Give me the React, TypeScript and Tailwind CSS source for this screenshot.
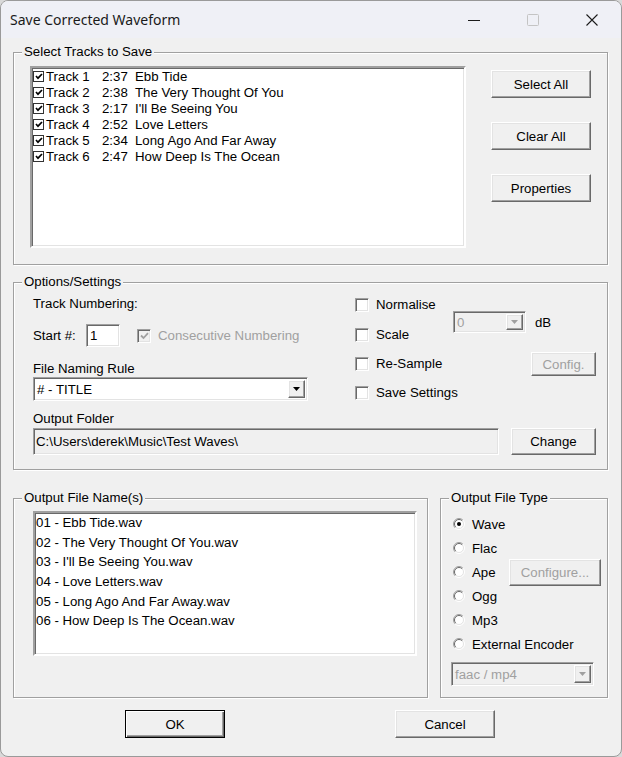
import React from "react";

const font = "font-['Liberation_Sans',Arial,sans-serif] text-[13.25px] leading-[15px] text-black";
const raised =
  "border border-t-white border-l-white border-r-[#696969] border-b-[#696969] shadow-[inset_-1px_-1px_0_#a0a0a0,inset_1px_1px_0_#e3e3e3] bg-[#f0f0f0]";
const sunken =
  "border border-t-[#a0a0a0] border-l-[#a0a0a0] border-r-white border-b-white shadow-[inset_1px_1px_0_#696969,inset_-1px_-1px_0_#e3e3e3]";

const tracks = [
  { n: 1, len: "2:37", title: "Ebb Tide" },
  { n: 2, len: "2:38", title: "The Very Thought Of You" },
  { n: 3, len: "2:17", title: "I'll Be Seeing You" },
  { n: 4, len: "2:52", title: "Love Letters" },
  { n: 5, len: "2:34", title: "Long Ago And Far Away" },
  { n: 6, len: "2:47", title: "How Deep Is The Ocean" },
];

const fileTypes = ["Wave", "Flac", "Ape", "Ogg", "Mp3", "External Encoder"];

function Button({ label, className = "", disabled = false, isDefault = false }: any) {
  const frame = isDefault
    ? "border border-black shadow-[inset_1px_1px_0_#fff,inset_-1px_-1px_0_#696969,inset_-2px_-2px_0_#a0a0a0] bg-[#f0f0f0]"
    : raised;
  return (
    <div className={`${frame} flex items-center justify-center ${disabled ? "text-[#a0a0a0]" : "text-black"} ${className}`}>
      {label}
    </div>
  );
}

function GroupBox({ title, className = "", children }: any) {
  return (
    <div className={`relative border border-[#a0a0a0] shadow-[inset_1px_1px_0_#fff,1px_1px_0_#fff] ${className}`}>
      <span className="absolute -top-[9px] left-[8px] px-[2px] bg-[#f0f0f0] leading-[15px]">{title}</span>
      {children}
    </div>
  );
}

function Arrow({ color = "#000" }: { color?: string }) {
  return (
    <svg width="7" height="4" viewBox="0 0 7 4">
      <polygon points="0,0 7,0 3.5,4" fill={color} />
    </svg>
  );
}

function Combo({ value, className = "", disabled = false }: any) {
  return (
    <div className={`${sunken} flex items-stretch p-[2px] ${disabled ? "bg-[#f0f0f0] text-[#a0a0a0]" : "bg-white"} ${className}`}>
      <span className="flex-1 flex items-center pl-[1px] whitespace-nowrap">{value}</span>
      <div className={`${raised} w-[17px] flex items-center justify-center`}>
        <Arrow color={disabled ? "#a0a0a0" : "#000"} />
      </div>
    </div>
  );
}

function Check3D({ checked = false, disabled = false }: any) {
  return (
    <div className={`${sunken} w-[14px] h-[14px] shrink-0 flex items-center justify-center ${disabled ? "bg-[#f0f0f0]" : "bg-white"}`}>
      {checked && (
        <svg width="9" height="8" viewBox="0 0 9 8">
          <path d="M1 3.5 L3.5 6 L8 1.2" fill="none" stroke={disabled ? "#a0a0a0" : "#000"} strokeWidth="1.8" />
        </svg>
      )}
    </div>
  );
}

function ListCheck() {
  return (
    <div className="w-[11px] h-[11px] shrink-0 border border-[#333] bg-white flex items-center justify-center">
      <svg width="8" height="7" viewBox="0 0 8 7">
        <path d="M1 3 L3 5.2 L7 1" fill="none" stroke="#000" strokeWidth="1.7" />
      </svg>
    </div>
  );
}

function Radio({ on = false }: { on?: boolean }) {
  return (
    <svg width="12" height="12" viewBox="0 0 12 12" className="shrink-0">
      <circle cx="6" cy="6" r="5" fill="#fff" />
      <path d="M2.1 9.9 A5.5 5.5 0 0 1 9.9 2.1" fill="none" stroke="#a0a0a0" />
      <path d="M9.9 2.1 A5.5 5.5 0 0 1 2.1 9.9" fill="none" stroke="#fff" />
      <path d="M2.8 9.2 A4.5 4.5 0 0 1 9.2 2.8" fill="none" stroke="#696969" />
      <path d="M9.2 2.8 A4.5 4.5 0 0 1 2.8 9.2" fill="none" stroke="#e3e3e3" />
      {on && <circle cx="6" cy="6" r="2" fill="#000" />}
    </svg>
  );
}

export default function App() {
  return (
    <div className="w-[622px] h-[757px] bg-[#d9d9d9]">
      <div className={`w-[622px] h-[757px] rounded-[8px] border border-[#9a9a9a] bg-[#f0f0f0] overflow-hidden ${font}`}>
        {/* caption bar */}
        <div className="h-[37px] bg-[#eff0f6] flex items-center">
          <span className="pl-[9px] flex-1 font-['Noto_Sans',sans-serif] text-[14px] text-[#1a1a1a]">Save Corrected Waveform</span>
          <div className="w-[59px] h-full flex items-center justify-center">
            <svg width="14" height="14" viewBox="0 0 14 14">
              <path d="M1 7.5 H13" stroke="#1b1b1b" />
            </svg>
          </div>
          <div className="w-[59px] h-full flex items-center justify-center">
            <svg width="14" height="14" viewBox="0 0 14 14">
              <rect x="1.5" y="1.5" width="11" height="11" rx="1" fill="none" stroke="#c4c4c4" />
            </svg>
          </div>
          <div className="w-[59px] h-full flex items-center justify-center">
            <svg width="14" height="14" viewBox="0 0 14 14">
              <path d="M1.5 1.5 L12.5 12.5 M12.5 1.5 L1.5 12.5" stroke="#1b1b1b" strokeWidth="1.1" />
            </svg>
          </div>
        </div>

        <div className="pl-[12px]">
          {/* tracks */}
          <GroupBox title="Select Tracks to Save" className="mt-[14px] w-[595px] h-[213px]">
            <div className="flex pl-[16px] pt-[13px]">
              <div className={`${sunken} bg-white w-[436px] h-[182px] pl-[1px] border-2`}>
                {tracks.map((t) => (
                  <div key={t.n} className="h-[16px] flex items-center whitespace-nowrap">
                    <ListCheck />
                    <span className="ml-[2px] w-[56px]">Track {t.n}</span>
                    <span className="w-[33px]">{t.len}</span>
                    <span>{t.title}</span>
                  </div>
                ))}
              </div>
              <div className="ml-[25px] mt-[4px] flex flex-col gap-[24px]">
                <Button label="Select All" className="w-[100px] h-[28px]" />
                <Button label="Clear All" className="w-[100px] h-[28px]" />
                <Button label="Properties" className="w-[100px] h-[28px]" />
              </div>
            </div>
          </GroupBox>

          {/* options */}
          <GroupBox title="Options/Settings" className="mt-[17px] w-[595px] h-[188px]">
            <div className="pl-[19px] pt-[13px]">
              <div className="flex">
                <div className="w-[275px] flex flex-col">
                  <span>Track Numbering:</span>
                  <div className="mt-[13px] h-[23px] flex items-center whitespace-nowrap">
                    <span className="w-[53px]">Start #:</span>
                    <div className={`${sunken} bg-white w-[34px] h-[23px] flex items-center pl-[3px]`}>1</div>
                    <div className="ml-[17px]">
                      <Check3D checked disabled />
                    </div>
                    <span className="ml-[7px] text-[#a0a0a0]">Consecutive Numbering</span>
                  </div>
                  <span className="mt-[14px]">File Naming Rule</span>
                  <Combo value="# - TITLE" className="mt-[1px] w-[275px] h-[24px]" />
                </div>

                <div className="ml-[47px] w-[98px] flex flex-col pt-[1px] whitespace-nowrap">
                  {["Normalise", "Scale", "Re-Sample", "Save Settings"].map((l, i) => (
                    <div key={l} className={`h-[15px] flex items-center ${i === 0 ? "" : i === 1 ? "mt-[15px]" : "mt-[14px]"}`}>
                      <Check3D />
                      <span className="ml-[7px]">{l}</span>
                    </div>
                  ))}
                </div>

                <div className="w-[143px] flex flex-col">
                  <div className="mt-[15px] flex items-center">
                    <Combo value="0" disabled className="w-[73px] h-[22px]" />
                    <span className="ml-[9px]">dB</span>
                  </div>
                  <Button label="Config." disabled className="mt-[19px] ml-auto w-[65px] h-[24px]" />
                </div>
              </div>

              <div className="mt-[10px]">Output Folder</div>
              <div className="mt-[2px] flex">
                <div className={`${sunken} bg-[#f0f0f0] w-[466px] h-[27px] flex items-center pl-[2px] whitespace-nowrap`}>
                  C:\Users\derek\Music\Test Waves\
                </div>
                <Button label="Change" className="ml-[12px] w-[85px] h-[27px]" />
              </div>
            </div>
          </GroupBox>

          <div className="mt-[28px] flex gap-[12px]">
            {/* file names */}
            <GroupBox title="Output File Name(s)" className="w-[415px] h-[200px]">
              <div className="pl-[19px] pt-[12px]">
                <div className={`${sunken} border-2 bg-white w-[384px] h-[145px] pl-[1px]`}>
                  {tracks.map((t) => (
                    <div key={t.n} className="h-[19.6px] flex items-center whitespace-nowrap">
                      0{t.n} - {t.title}.wav
                    </div>
                  ))}
                </div>
              </div>
            </GroupBox>

            {/* file type */}
            <GroupBox title="Output File Type" className="w-[168px] h-[200px]">
              <div className="pl-[10px] pt-[13px] flex flex-col">
                {fileTypes.map((f, i) => (
                  <div key={f} className="h-[24px] pl-[2px] flex items-center whitespace-nowrap">
                    <Radio on={i === 0} />
                    <span className={`ml-[7px] ${f === "Ape" ? "w-[37px]" : ""}`}>{f}</span>
                    {f === "Ape" && <Button label="Configure..." disabled className="w-[92px] h-[27px] shrink-0" />}
                  </div>
                ))}
                <Combo value="faac / mp4" disabled className="mt-[6px] w-[143px] h-[24px]" />
              </div>
            </GroupBox>
          </div>

          <div className="mt-[12px] flex">
            <Button label="OK" isDefault className="ml-[112px] w-[100px] h-[28px]" />
            <Button label="Cancel" className="ml-[170px] w-[100px] h-[28px]" />
          </div>
        </div>
      </div>
    </div>
  );
}
